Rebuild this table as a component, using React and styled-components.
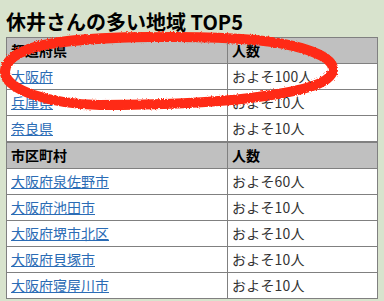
import React from "react";
import styled, { createGlobalStyle } from "styled-components";

const Global = createGlobalStyle`
  html, body { margin: 0; padding: 0; background: #d8e3cd; }
  body { font-family: "Noto Sans CJK JP", "Noto Sans", sans-serif; }
`;

const Page = styled.div`
  position: relative;
  width: 384px;
  height: 301px;
  padding: 0 7px 0 6px;
  box-sizing: border-box;
  overflow: hidden;
`;

const Title = styled.h2`
  margin: 0 0 1px;
  padding-top: 8px;
  font-size: 20px;
  line-height: 28px;
  font-weight: bold;
  color: #000;
`;

const Table = styled.table`
  width: 371px;
  border-collapse: collapse;
  background: #fff;
  table-layout: fixed;
  font-size: 14px;
`;

const Col = styled.col`
  width: ${(p) => p.$w};
`;

const Th = styled.th`
  background: #c0c0c0;
  border: 1px solid #808080;
  padding: 3px 4px;
  height: 19px;
  line-height: 19px;
  text-align: left;
  font-weight: bold;
  color: #000;
`;

const Td = styled.td`
  border: 1px solid #808080;
  padding: 3px 4px;
  height: 19px;
  line-height: 19px;
  color: #333;
  letter-spacing: ${(p) => (p.$num ? "0.2px" : "0")};
`;

const Link = styled.a`
  color: #2b6cb5;
  text-decoration: underline;
`;

const Scribble = styled.svg`
  position: absolute;
  left: 0;
  top: 0;
  pointer-events: none;
`;

const groups = [
  {
    head: "都道府県",
    rows: [
      ["大阪府", "およそ100人"],
      ["兵庫県", "およそ10人"],
      ["奈良県", "およそ10人"],
    ],
  },
  {
    head: "市区町村",
    rows: [
      ["大阪府泉佐野市", "およそ60人"],
      ["大阪府池田市", "およそ10人"],
      ["大阪府堺市北区", "およそ10人"],
      ["大阪府貝塚市", "およそ10人"],
      ["大阪府寝屋川市", "およそ10人"],
    ],
  },
];

export default function App() {
  return (
    <Page>
      <Global />
      <Title>休井さんの多い地域 TOP5</Title>
      {groups.map((g) => (
        <Table key={g.head}>
          <colgroup>
            <Col $w="221px" />
            <Col $w="150px" />
          </colgroup>
          <thead>
            <tr>
              <Th>{g.head}</Th>
              <Th>人数</Th>
            </tr>
          </thead>
          <tbody>
            {g.rows.map(([name, n]) => (
              <tr key={name}>
                <Td>
                  <Link href="#">{name}</Link>
                </Td>
                <Td $num>{n}</Td>
              </tr>
            ))}
          </tbody>
        </Table>
      ))}
      <Scribble width="384" height="301" viewBox="0 0 384 301">
        <defs>
          <filter id="rough" x="-10%" y="-20%" width="120%" height="140%">
            <feTurbulence type="fractalNoise" baseFrequency="0.7" numOctaves="2" seed="3" />
            <feDisplacementMap in="SourceGraphic" scale="3" />
          </filter>
        </defs>
        <path
          d="M 50,44 C 100,36 200,35 255,40 C 305,45 334,57 333,70 C 331,84 300,92 250,98 C 200,104 150,105 100,105 C 50,104 5,90 5,72 C 5,57 25,47 60,42 C 90,38 120,37 150,37"
          fill="none"
          stroke="#ff2a12"
          strokeWidth="10"
          strokeLinecap="round"
          filter="url(#rough)"
        />
      </Scribble>
    </Page>
  );
}
